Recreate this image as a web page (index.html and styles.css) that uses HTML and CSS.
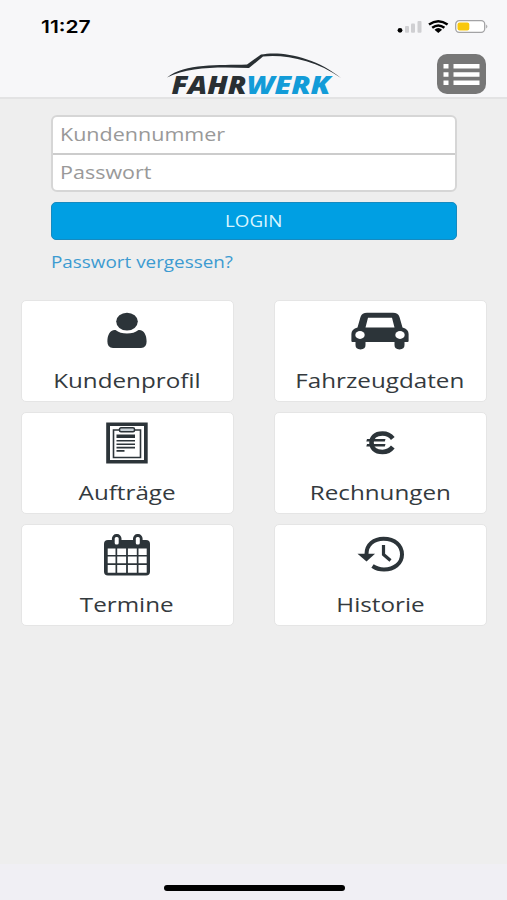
FILE: index.html
```html
<!DOCTYPE html>
<html lang="de">
<head>
<meta charset="utf-8">
<title>Fahrwerk</title>
<link rel="stylesheet" href="styles.css">
</head>
<body>
<header class="header">
  <div class="status">
    <span class="clock"><span class="wide">11:27</span></span>
    <svg class="indicators" viewBox="0 0 94 16" width="94" height="16">
      <circle cx="3" cy="11.300" r="2.400"/>
      <g fill="#cfcfd2"><rect x="8" y="7" width="4" height="6.700" rx="1"/><rect x="14" y="4.500" width="4" height="9.200" rx="1"/><rect x="20.500" y="2" width="4" height="11.700" rx="1"/></g>
      <g fill="none" stroke="#000" stroke-width="2.500"><path d="M32 5.500Q41.300-1 50.600 5.500"/><path d="M35.200 8.800Q41.300 4.200 47.400 8.800"/></g>
      <path d="M37.500 10.700Q41.300 7.500 45.100 10.700L41.300 14Z"/>
      <rect x="58.700" y="1.700" width="29" height="11.600" rx="3.500" fill="#fff" stroke="#a3a3a5" stroke-width="1.300"/>
      <rect x="60.500" y="3.400" width="11.800" height="8.200" rx="2" fill="#f9c80e"/>
      <path d="M89.300 5.500q2 2 0 4z" fill="#909092"/>
    </svg>
  </div>
  <div class="brandbar">
    <svg class="logo" viewBox="0 0 180 46" width="180" height="46">
      <path d="M2 26.500C20 12 54 14.500 82 13.500L96 3.500C116-.5 151 6 176 27C151 9 119 3 98 5.500L84 17C54 16 24 15.500 2 26.500Z" fill="#292f33"/>
      <text class="logo-text" x="6.500" y="43.300" fill="#292f33" textLength="75" lengthAdjust="spacingAndGlyphs">FAHR</text>
      <text class="logo-text" x="81.500" y="43.300" fill="#139cd8" textLength="84" lengthAdjust="spacingAndGlyphs">WERK</text>
    </svg>
    <svg class="menu" viewBox="0 0 49 40" width="49" height="40">
      <rect width="49" height="40" rx="10" fill="#777"/>
      <path fill="#fff" d="M6.500 10h5v4.500h-5zM16.500 10h26v4.500h-26zM6.500 18.300h5v4.500h-5zM16.500 18.300h26v4.500h-26zM6.500 26.600h5v4.500h-5zM16.500 26.600h26v4.500h-26z"/>
    </svg>
  </div>
</header>
<main class="content">
  <form class="login">
    <div class="fields">
      <div class="field"><span class="wide">Kundennummer</span></div>
      <div class="field"><span class="wide">Passwort</span></div>
    </div>
    <div class="submit"><span class="wide">LOGIN</span></div>
    <div class="forgot"><span class="wide">Passwort vergessen?</span></div>
  </form>
  <nav class="tiles">
    <div class="tile">
      <svg viewBox="0 0 60 44" width="60" height="44"><path d="M18.500 18Q23 21.500 30 21.500T41.500 18C47 17.500 49.600 23 49.600 29.500Q49.600 36 44 36H16Q10.400 36 10.400 29.500C10.400 23 13 17.500 18.500 18Z"/><ellipse cx="30" cy="9.600" rx="10.800" ry="8.900"/></svg>
      <span class="label"><span class="wide">Kundenprofil</span></span>
    </div>
    <div class="tile">
      <svg viewBox="0 0 60 44" width="60" height="44"><path fill-rule="evenodd" d="M17 .8H43Q48 .8 49.500 5L52.500 15.500Q58.600 17 58.600 22V29Q58.600 30 57.500 30H54.500V33Q54.500 37.400 49.500 37.400T44.500 33V30H15.500V33Q15.500 37.400 10.500 37.400T5.500 33V30H2.500Q1.400 30 1.400 29V22Q1.400 17 7.500 15.500L10.500 5Q12 .8 17 .8ZM18 5.800L15.500 15.500H44.500L42 5.800Z"/><ellipse cx="10" cy="23" rx="4.700" ry="3.900" fill="#fff"/><ellipse cx="50" cy="23" rx="4.700" ry="3.900" fill="#fff"/></svg>
      <span class="label"><span class="wide">Fahrzeugdaten</span></span>
    </div>
    <div class="tile">
      <svg viewBox="0 0 60 44" width="60" height="44"><path fill-rule="evenodd" d="M9.200-1.500H50.700V39.600H9.200ZM13 2V36H47V2Z"/><path d="M16.500 6H43.500V33.500H16.500Z" fill="#fff" stroke="#2c3439" stroke-width="1.600"/><rect x="22.500" y="3.800" width="15" height="4" rx="1.500" fill="#c8d0d6" stroke="#2c3439" stroke-width="1.500"/><path d="M19.500 10.500H38V14H19.500ZM19.500 16H38v1.600H19.500ZM19.500 19.500H38v1.600H19.500ZM19.500 22.800H38v1.600H19.500ZM19.500 26H27.500v1.800H19.500Z"/></svg>
      <span class="label"><span class="wide">Aufträge</span></span>
    </div>
    <div class="tile">
      <svg viewBox="0 0 60 44" width="60" height="44"><path d="M42.800 14.500Q39 9.500 32.500 9.500C24.500 9.500 21.500 14 21.500 18.700S24.500 28 32.500 28Q39 28 42.800 23" fill="none" stroke="#2c3439" stroke-width="4.600"/><path d="M17 15H35.500L34.800 17.500H16.300ZM17 20H35.500L34.800 22.500H16.300Z"/></svg>
      <span class="label"><span class="wide">Rechnungen</span></span>
    </div>
    <div class="tile">
      <svg viewBox="0 0 60 44" width="60" height="44"><g transform="translate(0 -1.500)"><rect x="7" y="5.500" width="46" height="35.500" rx="4"/><path fill="#fff" d="M10.700 14H18.500V20.500H10.700ZM20.200 14H29.100V20.500H20.200ZM30.900 14H39.800V20.500H30.900ZM41.500 14H49.700V20.500H41.500ZM10.700 22.100H18.500V28.800H10.700ZM20.200 22.100H29.100V28.800H20.200ZM30.900 22.100H39.800V28.800H30.900ZM41.500 22.100H49.700V28.800H41.500ZM10.700 30.500H18.500V38.200H10.700ZM20.200 30.500H29.100V38.200H20.200ZM30.900 30.500H39.800V38.200H30.900ZM41.500 30.500H49.700V38.200H41.500Z"/><g fill="#fff" stroke="#2c3439" stroke-width="2.800"><rect x="16.300" y="1" width="6.800" height="10.500" rx="3"/><rect x="37.400" y="1" width="6.800" height="10.500" rx="3"/></g></g></svg>
      <span class="label"><span class="wide">Termine</span></span>
    </div>
    <div class="tile">
      <svg viewBox="0 0 60 44" width="60" height="44"><g transform="translate(0 -1.500)"><path d="M16.500 19.500C16.500 10 24 4.200 33.500 4.200C45 4.200 52 11 52 20S44 35 34 35Q27.500 35 22.500 31.500" fill="none" stroke="#2c3439" stroke-width="4"/><path d="M7.500 19.300H25L16.500 27Z"/><path d="M33.500 10.500V20L40.500 26" fill="none" stroke="#2c3439" stroke-width="3.200"/></g></svg>
      <span class="label"><span class="wide">Historie</span></span>
    </div>
  </nav>
</main>
<footer class="footer"><div class="home"></div></footer>
</body>
</html>
```
FILE: styles.css
```css
* { box-sizing: border-box; }
body {
  margin: 0;
  height: 900px;
  display: flex;
  flex-direction: column;
  overflow: hidden;
  background: #eee;
  color: #343a3e;
  font-family: "Open Sans", sans-serif;
}
svg { display: block; overflow: visible; }
.wide { display: inline-block; transform: scaleX(1.21); transform-origin: left; white-space: nowrap; }
.header { height: 99px; background: #f7f7f9; border-bottom: 2px solid #e3e3e4; }
.status { display: flex; justify-content: space-between; padding: 14px 16px 0 41px; height: 51px; }
.clock { font: 600 17.500px/25px Inter, sans-serif; color: #000; }
.clock .wide { transform: scaleX(1.2); }
.indicators { margin-top: 5px; }
.brandbar { display: flex; justify-content: space-between; padding: 0 21px 0 165px; }
.logo-text { font-size: 24px; font-weight: 800; font-style: italic; }
.menu { margin-top: 3px; }
.content { flex: 1; }
.login { padding: 16px 50px 0 51px; margin: 0; }
.fields { background: #fff; border: 2px solid #d6d6d6; border-radius: 6px; height: 77px; }
.field { height: 36px; padding-left: 7px; font-size: 17.800px; line-height: 34px; color: #999; }
.field + .field { height: 38px; border-top: 2px solid #ccc; }
.submit { height: 38px; margin-top: 10px; border: 1px solid #168ac0; border-radius: 5px; background: #009fe3; color: #d9f5ff; font-size: 15.500px; line-height: 37px; text-align: center; }
.submit .wide, .label .wide { transform-origin: center; }
.forgot { margin-top: 10px; font-size: 15.600px; line-height: 25px; color: #3c9bd1; }
.tiles { display: grid; grid-template-columns: 213px 213px; grid-auto-rows: 102px; gap: 10px 40px; padding: 25px 20px 0 21px; }
.tile { display: flex; flex-direction: column; align-items: center; padding: 11px 1px 0 0; background: #fff; border: 1px solid #e5e5e5; border-radius: 5px; }
.tile svg { fill: #2c3439; }
.label { margin-top: 10px; font-size: 20px; line-height: 29px; }
.footer { height: 36px; padding: 21px 0 0 1px; background: #f0eff4; }
.home { width: 181px; height: 6px; margin: 0 auto; border-radius: 3px; background: #000; }
```
